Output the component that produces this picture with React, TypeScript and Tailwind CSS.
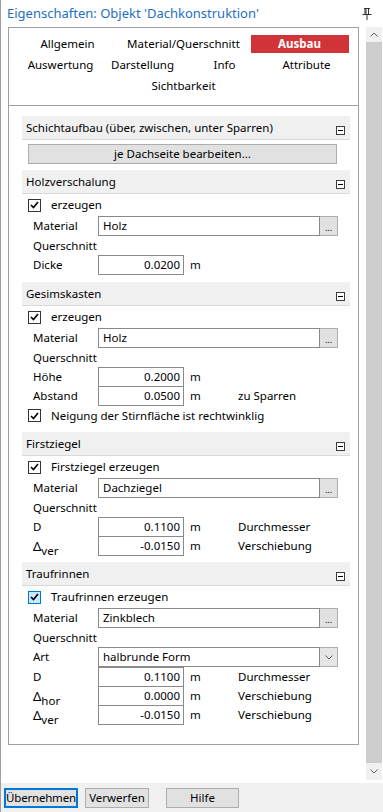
import React from "react";

const font = { fontFamily: '"Noto Sans", "Open Sans", Arial, sans-serif' };

function Minus() {
  return (
    <div className="w-[9px] h-[9px] border border-[#3c3c3c] bg-white flex items-center justify-center self-end mb-[4px]">
      <div className="w-[5px] h-px bg-[#000]" />
    </div>
  );
}

function Header({ title }: { title: string }) {
  return (
    <div className="h-[24px] bg-[#f0f0f0] border-b border-[#dadada] flex justify-between pl-[4px] pr-[5px]">
      <span className="self-center">{title}</span>
      <Minus />
    </div>
  );
}

function Box({ active }: { active?: boolean }) {
  return (
    <div
      className={
        active
          ? "w-[13px] h-[13px] border border-[#0078d7] bg-[#cce8ff] flex items-center justify-center"
          : "w-[13px] h-[13px] border border-[#333] bg-white flex items-center justify-center"
      }
    >
      <svg width="9" height="8" viewBox="0 0 9 8">
        <path d="M1 4 L3.5 6.5 L8 1" fill="none" stroke="#000" strokeWidth="1.6" />
      </svg>
    </div>
  );
}

function Check({ label, active }: { label: string; active?: boolean }) {
  return (
    <div className="h-[22px] flex items-center pl-[6px]">
      <Box active={active} />
      <span className="ml-[10px]">{label}</span>
    </div>
  );
}

function Material({ value }: { value: string }) {
  return (
    <div className="h-[20px] flex items-center">
      <span className="w-[65px] pl-[11px] box-content">Material</span>
      <div className="w-[222px] h-[20px] border border-[#8a8a8a] bg-white flex items-center pl-[4px]">{value}</div>
      <div className="w-[18px] h-[20px] border border-l-0 border-[#adadad] bg-[#e1e1e1] flex items-end justify-center pb-[3px] text-[9px] leading-none">
        ...
      </div>
    </div>
  );
}

function Plain({ label }: { label: string }) {
  return <div className="h-[19px] flex items-center pl-[11px]">{label}</div>;
}

function Num({ label, value, note, first }: { label: React.ReactNode; value: string; note?: string; first?: boolean }) {
  return (
    <div className={first ? "h-[20px] flex items-center" : "h-[20px] -mt-px flex items-center"}>
      <span className="w-[65px] pl-[11px] box-content">{label}</span>
      <div className="w-[86px] h-[20px] border border-[#8a8a8a] bg-white flex items-center justify-end pr-[3px]">{value}</div>
      <span className="ml-[6px] w-[48px]">m</span>
      {note && <span>{note}</span>}
    </div>
  );
}

function Delta({ sub }: { sub: string }) {
  return (
    <span className="text-[13px]">
      Δ<span className="relative top-[4px] text-[11.5px]">{sub}</span>
    </span>
  );
}

function Btn({ children, w, primary }: { children: React.ReactNode; w: string; primary?: boolean }) {
  return (
    <div
      className={
        primary
          ? `${w} h-[20px] border-2 border-[#0078d7] bg-[#e1e1e1] flex items-center justify-center tracking-[-0.2px]`
          : `${w} h-[20px] border border-[#adadad] bg-[#e1e1e1] flex items-center justify-center`
      }
    >
      {children}
    </div>
  );
}

export default function App() {
  return (
    <div style={font} className="w-[383px] h-[812px] bg-white border-l border-[#a0a0a0] flex flex-col text-[11.5px] text-black leading-none">
      <div className="h-[27px] flex items-center justify-between pl-[6px] pr-[11px]">
        <span className="text-[13px] text-[#1e6fbf]">Eigenschaften: Objekt 'Dachkonstruktion'</span>
        <svg width="10" height="12" viewBox="0 0 10 12">
          <path d="M2 0.5h6 M3 0.5v6 M4 0.5v6 M6.5 0.5v6 M0.5 6.5h9 M5 7v5" stroke="#333" fill="none" />
        </svg>
      </div>

      <div className="flex h-[756px]">
        <div className="pl-[7px]">
          <div className="w-[351px] h-[718px] border border-[#a0a0a0] flex flex-col">
            <div className="h-[78px] border-b border-[#a0a0a0] pt-[7px] flex flex-col items-center gap-[3px]">
              <div className="grid grid-cols-[116px_116px_116px] h-[18px] items-center text-center">
                <span>Allgemein</span>
                <span>Material/Querschnitt</span>
                <div className="mx-[9px] h-[18px] bg-[#d13438] text-white font-bold flex items-center justify-center">Ausbau</div>
              </div>
              <div className="grid grid-cols-[82px_82px_82px_82px] h-[18px] items-center text-center">
                <span>Auswertung</span>
                <span>Darstellung</span>
                <span>Info</span>
                <span>Attribute</span>
              </div>
              <div className="h-[18px] flex items-center">Sichtbarkeit</div>
            </div>

            <div className="pl-[13px] pr-[8px] pt-[10px] flex flex-col">
              <Header title="Schichtaufbau (über, zwischen, unter Sparren)" />
              <div className="mt-[4px] ml-[6px] w-[309px] h-[20px] border border-[#adadad] bg-[#e1e1e1] flex items-center justify-center">
                je Dachseite bearbeiten...
              </div>

              <div className="mt-[6px]">
                <Header title="Holzverschalung" />
                <Check label="erzeugen" />
                <Material value="Holz" />
                <Plain label="Querschnitt" />
                <Num first label="Dicke" value="0.0200" />
              </div>

              <div className="mt-[7px]">
                <Header title="Gesimskasten" />
                <Check label="erzeugen" />
                <Material value="Holz" />
                <Plain label="Querschnitt" />
                <Num first label="Höhe" value="0.2000" />
                <Num label="Abstand" value="0.0500" note="zu Sparren" />
                <div className="h-[19px] flex items-center pl-[6px]">
                  <Box />
                  <span className="ml-[10px]">Neigung der Stirnfläche ist rechtwinklig</span>
                </div>
              </div>

              <div className="mt-[7px]">
                <Header title="Firstziegel" />
                <Check label="Firstziegel erzeugen" />
                <Material value="Dachziegel" />
                <Plain label="Querschnitt" />
                <Num first label="D" value="0.1100" note="Durchmesser" />
                <Num label={<Delta sub="ver" />} value="-0.0150" note="Verschiebung" />
              </div>

              <div className="mt-[6px]">
                <Header title="Traufrinnen" />
                <Check label="Traufrinnen erzeugen" active />
                <Material value="Zinkblech" />
                <Plain label="Querschnitt" />
                <div className="h-[20px] flex items-center">
                  <span className="w-[65px] pl-[11px] box-content">Art</span>
                  <div className="w-[222px] h-[20px] border border-[#8a8a8a] bg-white flex items-center pl-[4px]">halbrunde Form</div>
                  <div className="w-[18px] h-[20px] border border-l-0 border-[#adadad] bg-[#e5e5e5] flex items-center justify-center">
                    <svg width="8" height="5" viewBox="0 0 8 5">
                      <path d="M0.5 0.5 L4 4 L7.5 0.5" fill="none" stroke="#606060" />
                    </svg>
                  </div>
                </div>
                <Num first label="D" value="0.1100" note="Durchmesser" />
                <Num label={<Delta sub="hor" />} value="0.0000" note="Verschiebung" />
                <Num label={<Delta sub="ver" />} value="-0.0150" note="Verschiebung" />
              </div>
            </div>
          </div>
        </div>

        <div className="ml-[7px] w-[16px] h-[753px] bg-[#f0f0f0] flex flex-col">
          <div className="h-[15px] flex items-center justify-center">
            <svg width="8" height="5" viewBox="0 0 8 5">
              <path d="M0.5 4.5 L4 1 L7.5 4.5" fill="none" stroke="#606060" />
            </svg>
          </div>
          <div className="flex-1 bg-[#cdcdcd]" />
          <div className="h-[17px] flex items-center justify-center">
            <svg width="8" height="5" viewBox="0 0 8 5">
              <path d="M0.5 0.5 L4 4 L7.5 0.5" fill="none" stroke="#606060" />
            </svg>
          </div>
        </div>
      </div>

      <div className="flex-1 bg-[#f0f0f0] flex items-start pt-[5px] pl-[3px]">
        <Btn w="w-[74px]" primary>Übernehmen</Btn>
        <div className="ml-[7px]">
          <Btn w="w-[64px]">Verwerfen</Btn>
        </div>
        <div className="ml-[17px]">
          <Btn w="w-[73px]">Hilfe</Btn>
        </div>
      </div>
    </div>
  );
}
